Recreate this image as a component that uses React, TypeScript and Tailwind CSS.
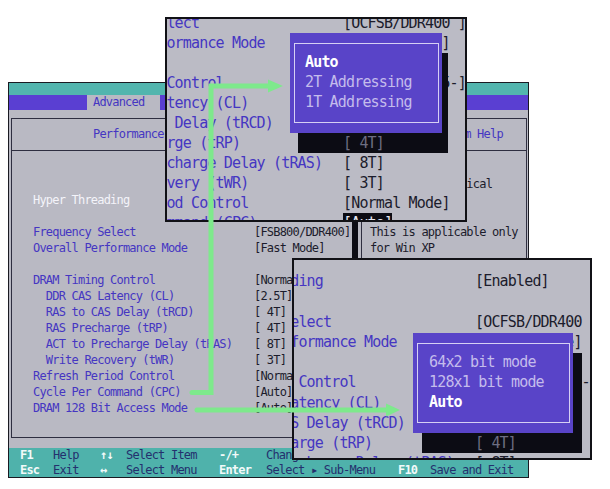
import * as React from "react";
import clsx from "clsx";

type Row = {
  label: string;
  value?: string;
  active?: boolean; // item under the cursor, drawn in white
  dim?: boolean; // value that sits on the popup shadow
  selected?: boolean; // value in reverse video
};

const mono = "font-['DejaVu_Sans_Mono','Liberation_Mono',monospace]";

const mainRows: Row[] = [
  { label: "Hyper Threading", value: "[Enabled]", active: true },
  { label: "" },
  { label: "Frequency Select", value: "[FSB800/DDR400]" },
  { label: "Overall Performance Mode", value: "[Fast Mode]" },
  { label: "" },
  { label: "DRAM Timing Control", value: "[Normal   2.5-]" },
  { label: "  DDR CAS Latency (CL)", value: "[2.5T]" },
  { label: "  RAS to CAS Delay (tRCD)", value: "[ 4T]" },
  { label: "  RAS Precharge (tRP)", value: "[ 4T]" },
  { label: "  ACT to Precharge Delay (tRAS)", value: "[ 8T]" },
  { label: "  Write Recovery (tWR)", value: "[ 3T]" },
  { label: "Refresh Period Control", value: "[Normal Mode]" },
  { label: "Cycle Per Command (CPC)", value: "[Auto]" },
  { label: "DRAM 128 Bit Access Mode", value: "[Auto]" },
];

const cpcRows: Row[] = [
  { label: "Frequency Select", value: "[OCFSB/DDR400 ]" },
  { label: "Overall Performance Mode", value: "[Normal Mode]" },
  { label: "" },
  { label: "DRAM Timing Control", value: "[Normal   2.5-]" },
  { label: "  DDR CAS Latency (CL)", value: "[2.5T]" },
  { label: "  RAS to CAS Delay (tRCD)", value: "[ 4T]" },
  { label: "  RAS Precharge (tRP)", value: "[ 4T]", dim: true },
  { label: "  ACT to Precharge Delay (tRAS)", value: "[ 8T]" },
  { label: "  Write Recovery (tWR)", value: "[ 3T]" },
  { label: "Refresh Period Control", value: "[Normal Mode]" },
  { label: "Cycle Per Command (CPC)", value: "[Auto]", selected: true },
];

const accessRows: Row[] = [
  { label: "Hyper Threading", value: "[Enabled]" },
  { label: "" },
  { label: "Frequency Select", value: "[OCFSB/DDR400 ]" },
  { label: "Overall Performance Mode", value: "[Normal Mode]" },
  { label: "" },
  { label: "DRAM Timing Control", value: "[Normal   2.5-]" },
  { label: "  DDR CAS Latency (CL)", value: "[2.5T]" },
  { label: "  RAS to CAS Delay (tRCD)", value: "[ 4T]" },
  { label: "  RAS Precharge (tRP)", value: "[ 4T]", dim: true },
  { label: "  ACT to Precharge Delay (tRAS)", value: "[ 8T]" },
];

const helpLines = [
  "Enabled turns",
  "on both the logical",
  "processors.",
  "",
  "This is applicable only",
  "for Win XP",
];

const keyCols = [
  "w-[33px]",
  "w-[47px]",
  "w-[26px]",
  "w-[93px]",
  "w-[47px]",
  "w-[132px]",
  "w-[32px]",
  "",
];

const keyRows = [
  ["F1", "Help", "↑↓", "Select Item", "-/+", "Change Values", "F9", "Menu in BIOS"],
  ["Esc", "Exit", "↔", "Select Menu", "Enter", "Select ▸ Sub-Menu", "F10", "Save and Exit"],
];

function ItemList({
  rows,
  rowClass,
  labelClass,
}: {
  rows: Row[];
  rowClass: string;
  labelClass: string;
}) {
  return (
    <div>
      {rows.map((r, i) => (
        <div key={i} className={clsx("flex whitespace-pre", rowClass)}>
          <span
            className={clsx(
              "shrink-0",
              labelClass,
              r.active ? "text-[#f4f4fa]" : "text-[#4536c2]"
            )}
          >
            {r.label}
          </span>
          {r.value && (
            <span
              className={clsx(
                r.dim && "relative z-20 text-[#6e6e82]",
                r.selected && "bg-[#0c0c14] text-[#e6e6f0]",
                !r.dim && !r.selected && "text-[#1c1c2c]"
              )}
            >
              {r.value}
            </span>
          )}
        </div>
      ))}
    </div>
  );
}

function PopupItems({ items, current }: { items: string[]; current: string }) {
  return (
    <>
      {items.map((it) => (
        <div
          key={it}
          className={clsx(
            "h-[20px] leading-[20px] whitespace-pre",
            it === current ? "font-bold text-white" : "text-[#c4bcec]"
          )}
        >
          {it}
        </div>
      ))}
    </>
  );
}

export default function App() {
  return (
    <div
      className={clsx(
        "relative w-[610px] h-[489px] overflow-hidden bg-white pl-[8px] pt-[82px]",
        mono
      )}
    >
      {/* setup screen */}
      <div className="flex h-[396px] w-[521px] flex-col border border-[#1a1a22] bg-[#b9b9c3] text-[12px] tracking-[-0.8px]">
        <div className="h-[12px] bg-[#52b5ae]" />
        <div className="flex h-[15px] bg-[#5a3fd2] pl-[78px]">
          <div className="w-[73px] bg-[#b9b9c3] pl-[6px] leading-[15px] text-[#4536c2]">
            Advanced
          </div>
        </div>

        <div className="pl-[2px] pr-[1px] pt-[8px] pb-[10px]">
          <div className="flex h-[320px] gap-[3px]">
            <div className="flex w-[347px] flex-col border border-[#2e2e40] border-r-[6px] border-r-[#0c0c14]">
              <div className="h-[32px] shrink-0 border-b border-[#2e2e40] pl-[81px] leading-[31px] text-[#4536c2]">
                Performance Features
              </div>
              <div className="pl-[21px] pt-[41px]">
                <ItemList
                  rows={mainRows}
                  rowClass="h-[16px] leading-[16px]"
                  labelClass="w-[221px]"
                />
              </div>
            </div>
            <div className="flex flex-1 flex-col border border-[#2e2e40]">
              <div className="h-[32px] shrink-0 border-b border-[#2e2e40] pl-[83px] leading-[31px] text-[#4536c2]">
                Item Help
              </div>
              <div className="pl-[8px] pt-[9px] text-[#1c1c2c]">
                {helpLines.map((l, i) => (
                  <div key={i} className="h-[16px] leading-[16px] whitespace-pre">
                    {l}
                  </div>
                ))}
              </div>
            </div>
          </div>
        </div>

        <div className="h-[29px] bg-[#4fb2ab] pl-[11px]">
          {keyRows.map((row, i) => (
            <div key={i} className="flex h-[14.5px] leading-[14.5px] whitespace-pre">
              {row.map((cell, j) => (
                <span
                  key={j}
                  className={clsx(
                    "shrink-0",
                    keyCols[j],
                    j % 2 === 0 ? "font-bold text-[#f2fafa]" : "text-[#24306e]"
                  )}
                >
                  {cell}
                </span>
              ))}
            </div>
          ))}
        </div>
      </div>

      {/* close-up: Cycle Per Command options */}
      <div className="absolute left-[165px] top-[17px] isolate h-[205px] w-[302px] overflow-hidden border-2 border-[#111116] bg-[#bbbbc5] text-[15px] tracking-[-0.83px]">
        <div className="ml-[-99px] mt-[-6px]">
          <ItemList rows={cpcRows} rowClass="h-[20px] leading-[20px]" labelClass="w-[275px]" />
        </div>
        <div className="absolute left-[131px] top-[34px] z-10 h-[100px] w-[150px] bg-[#0c0c14]" />
        <div className="absolute left-[123px] top-[14px] z-30 h-[100px] w-[152px] bg-[#5944c8] py-[10px] pl-[4px] pr-[3px]">
          <div className="h-full border-[1.5px] border-[#d6d0f4] pl-[10px] pt-[8px]">
            <PopupItems items={["Auto", "2T Addressing", "1T Addressing"]} current="Auto" />
          </div>
        </div>
      </div>

      {/* close-up: DRAM 128 bit access options */}
      <div className="absolute left-[292px] top-[258px] isolate h-[202px] w-[300px] overflow-hidden border-2 border-[#111116] bg-[#bbbbc5] text-[15px] tracking-[-0.83px]">
        <div className="ml-[-94px] mt-[11px]">
          <ItemList rows={accessRows} rowClass="h-[20.25px] leading-[20.25px]" labelClass="w-[275px]" />
        </div>
        <div className="absolute left-[128px] top-[93px] z-10 h-[100px] w-[160px] bg-[#0c0c14]" />
        <div className="absolute left-[119px] top-[73px] z-30 h-[100px] w-[160px] bg-[#5944c8] py-[10px] pl-[4px] pr-[3px]">
          <div className="h-full border-[1.5px] border-[#d6d0f4] pl-[11px] pt-[8px]">
            <PopupItems items={["64x2 bit mode", "128x1 bit mode", "Auto"]} current="Auto" />
          </div>
        </div>
      </div>

      {/* pointer arrows */}
      <svg
        className="pointer-events-none absolute left-0 top-0"
        width="610"
        height="489"
        viewBox="0 0 610 489"
      >
        <polyline
          points="192,392.5 211,392.5 211,86 270,86"
          fill="none"
          stroke="#7ee98c"
          strokeWidth="5"
          strokeLinecap="round"
        />
        <polygon points="268,79.5 283,86 268,92.5" fill="#7ee98c" />
        <line x1="197" y1="410" x2="388" y2="410" stroke="#7ee98c" strokeWidth="5" strokeLinecap="round" />
        <polygon points="386,403.5 400,410 386,416.5" fill="#7ee98c" />
      </svg>
    </div>
  );
}
